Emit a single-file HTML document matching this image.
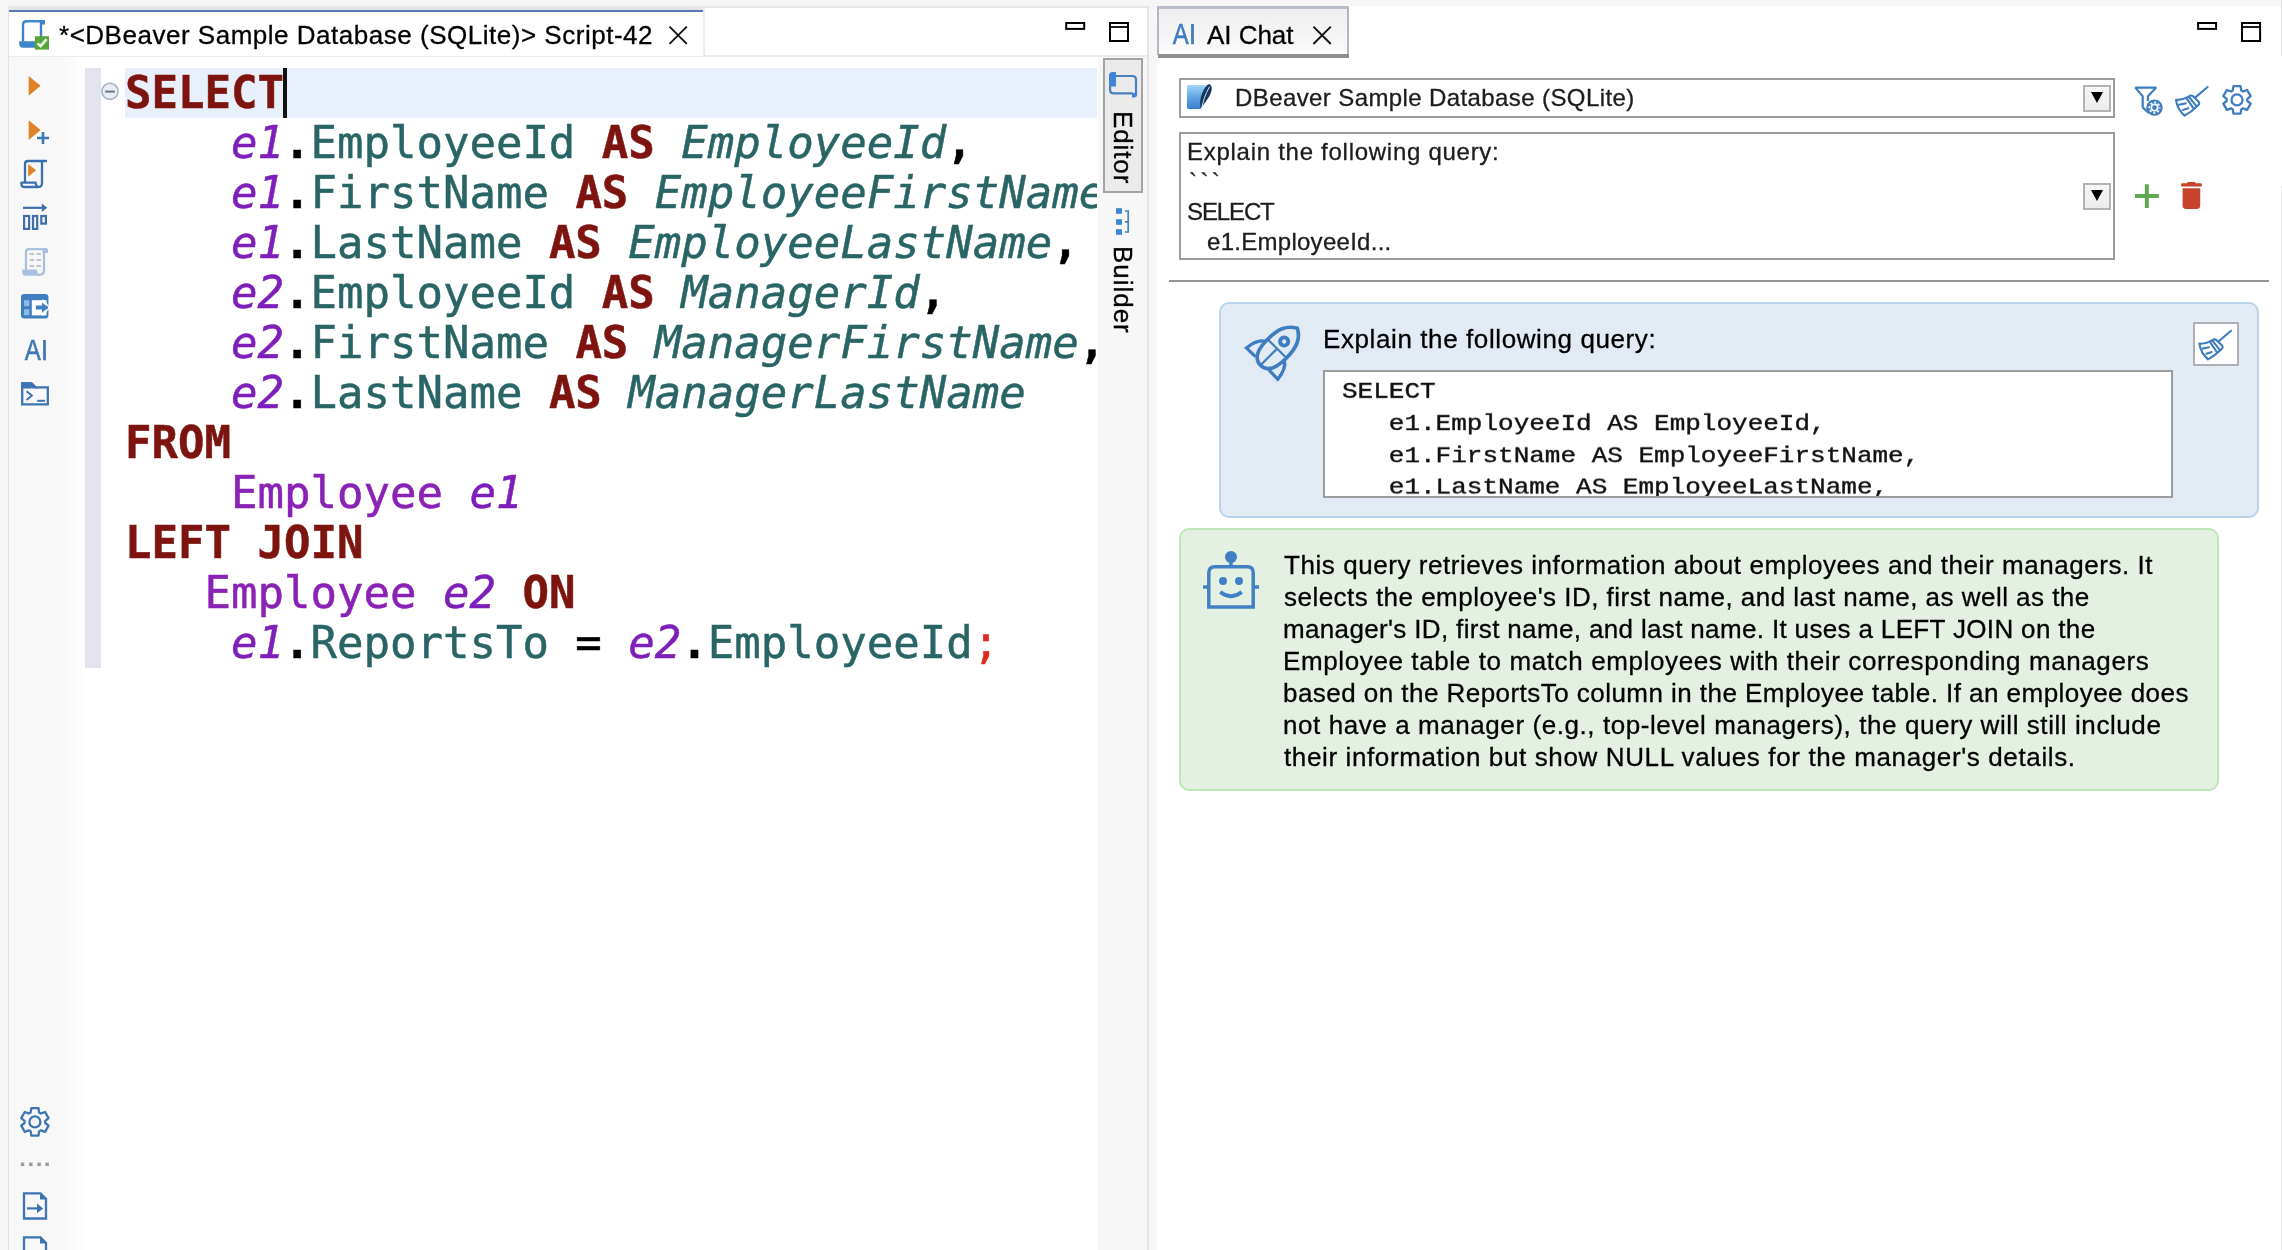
<!DOCTYPE html>
<html lang="en">
<head>
<meta charset="utf-8">
<title>DBeaver - AI Chat</title>
<style>
html,body{margin:0;padding:0;}
body{width:2282px;height:1250px;position:relative;overflow:hidden;background:#f6f6f6;font-family:"Liberation Sans",sans-serif;color:#000;}
.abs{position:absolute;}
.tabtxt,.ui,.chat,#code,#ccode,.vtxt{will-change:transform;}
svg{position:absolute;overflow:visible;}
/* ---------- left pane ---------- */
#lp{left:8px;top:6px;width:1141px;height:1244px;background:#fff;border-left:1px solid #e2e2e2;border-right:2px solid #e4e4e4;border-top:2px solid #e7e7e7;box-sizing:border-box;}
#ltabbar{left:9px;top:8px;width:1138px;height:49px;background:#fff;border-bottom:2px solid #ebebeb;box-sizing:border-box;}
#ltab{left:9px;top:8px;width:696px;height:48px;background:#fff;border-right:2px solid #ebebeb;box-sizing:border-box;}
#ltabtop{left:9px;top:8px;width:694px;height:2px;background:#e3e5e6;}
#ltabline{left:9px;top:10px;width:694px;height:2px;background:#5b79b8;}
.tabtxt{font-size:26px;line-height:30px;white-space:nowrap;-webkit-text-stroke:0.3px #000;}
#toolbar{left:9px;top:57px;width:54px;height:1193px;background:#f8f8f8;}
#tbfade{left:63px;top:57px;width:24px;height:1193px;background:linear-gradient(90deg,#f8f8f8,#ffffff);}
#ruler{left:85px;top:68px;width:16px;height:600px;background:#e3e2ef;}
#curline{left:125px;top:68px;width:972px;height:50px;background:#e8f0fb;}
#caret{left:283px;top:68px;width:4px;height:50px;background:#111;}
#code{left:125px;top:68px;width:972px;height:620px;overflow:hidden;font-family:"DejaVu Sans Mono","Liberation Mono",monospace;font-size:44px;line-height:50px;white-space:pre;color:#000;-webkit-text-stroke:0.5px;}
#code div{height:50px;}
.k{color:#7e1410;font-weight:bold;}
.a{color:#7d1fb8;font-style:italic;}
.c{color:#2a6565;}
.ci{color:#2a6565;font-style:italic;}
.t{color:#8a22b5;}
.r{color:#e0281c;}
#code b{font-weight:bold;color:#000;}
#rstrip{left:1098px;top:57px;width:49px;height:1193px;background:#f7f7f7;}
#edtab{left:1103px;top:58px;width:40px;height:135px;background:#ebebeb;border:2px solid #a4a4a4;box-sizing:border-box;}
.vtxt{font-size:26px;line-height:30px;white-space:nowrap;transform-origin:0 0;transform:rotate(90deg);-webkit-text-stroke:0.3px #000;}
/* ---------- right pane ---------- */
#rp{left:1157px;top:6px;width:1125px;height:1244px;background:#fff;}
#rtab{left:1157px;top:6px;width:191.5px;height:49px;box-sizing:border-box;border:2px solid #b3b6c5;border-top:3.5px solid #b9bccb;border-bottom:none;background:linear-gradient(#eeeef0,#fbfbfb);}
#rtabb{left:1157.5px;top:54.3px;width:191px;height:3.4px;background:#8f8f8f;}
.box{box-sizing:border-box;border:2px solid #9c9c9c;background:#fff;}
.ddbtn{box-sizing:border-box;border:2px solid #b3b3b3;background:linear-gradient(#f6f6f6,#ececec);width:28px;height:27px;}
.ddbtn:after{content:"";position:absolute;left:6px;top:5.6px;border-left:6px solid transparent;border-right:6px solid transparent;border-top:11.4px solid #000;}
.ui{font-size:24px;line-height:30px;white-space:nowrap;color:#1c1c1c;-webkit-text-stroke:0.3px #1c1c1c;}
#sep{left:1169px;top:280px;width:1100px;height:2px;background:#949494;}
#bub1{left:1219px;top:302px;width:1039.5px;height:215.5px;box-sizing:border-box;border:2px solid #b9d3ec;border-radius:10px;background:#e2eaf3;}
#bub2{left:1179px;top:528.4px;width:1039.5px;height:263px;box-sizing:border-box;border:2px solid #bfe6b9;border-radius:10px;background:#e4f0e1;}
.chat{font-size:26px;line-height:32px;white-space:nowrap;color:#000;-webkit-text-stroke:0.3px #000;}
#cbox{left:1323px;top:370px;width:850px;height:128px;overflow:hidden;}
#ccode{left:17px;top:3.5px;font-family:"Liberation Mono",monospace;font-size:26px;line-height:36.78px;white-space:pre;color:#111;-webkit-text-stroke:0.45px #111;transform-origin:0 0;transform:scaleY(0.87);}
#bbtn{left:2193px;top:322px;width:46px;height:44px;box-sizing:border-box;border:2px solid #adb0b5;background:#fff;}
</style>
</head>
<body>
<!-- LEFT PANE -->
<div id="lp" class="abs"></div>
<div id="ltabbar" class="abs"></div>
<div id="ltab" class="abs"></div>
<div id="ltabtop" class="abs"></div>
<div id="ltabline" class="abs"></div>
<div id="t_tab" class="abs tabtxt" style="left:58.60px;top:20px;letter-spacing:0.515px;">*&lt;DBeaver Sample Database (SQLite)&gt; Script-42</div>
<div id="toolbar" class="abs"></div>
<div id="tbfade" class="abs"></div>
<div id="ruler" class="abs"></div>
<div id="curline" class="abs"></div>
<div id="code" class="abs"><div><span class="k">SELECT</span></div><div>    <span class="a">e1</span><b>.</b><span class="c">EmployeeId</span> <span class="k">AS</span> <span class="ci">EmployeeId</span><b>,</b></div><div>    <span class="a">e1</span><b>.</b><span class="c">FirstName</span> <span class="k">AS</span> <span class="ci">EmployeeFirstName</span><b>,</b></div><div>    <span class="a">e1</span><b>.</b><span class="c">LastName</span> <span class="k">AS</span> <span class="ci">EmployeeLastName</span><b>,</b></div><div>    <span class="a">e2</span><b>.</b><span class="c">EmployeeId</span> <span class="k">AS</span> <span class="ci">ManagerId</span><b>,</b></div><div>    <span class="a">e2</span><b>.</b><span class="c">FirstName</span> <span class="k">AS</span> <span class="ci">ManagerFirstName</span><b>,</b></div><div>    <span class="a">e2</span><b>.</b><span class="c">LastName</span> <span class="k">AS</span> <span class="ci">ManagerLastName</span></div><div><span class="k">FROM</span></div><div>    <span class="t">Employee</span> <span class="a">e1</span></div><div><span class="k">LEFT JOIN</span></div><div>   <span class="t">Employee</span> <span class="a">e2</span> <span class="k">ON</span></div><div>    <span class="a">e1</span><b>.</b><span class="c">ReportsTo</span> = <span class="a">e2</span><b>.</b><span class="c">EmployeeId</span><span class="r">;</span></div></div>
<div id="caret" class="abs"></div>
<div id="rstrip" class="abs"></div>
<div id="edtab" class="abs"></div>
<div id="t_ed" class="abs vtxt" style="left:1138px;top:111.00px;letter-spacing:0.880px;">Editor</div>
<div id="t_bu" class="abs vtxt" style="left:1138px;top:246.00px;letter-spacing:0.966px;">Builder</div>
<!--ICL_START--><svg id="icl" style="left:0;top:0" width="1160" height="1250" viewBox="0 0 1160 1250">
<!-- tab icon: script + green check -->
<g fill="none" stroke="#3d84c8" stroke-width="2.4">
<path d="M44.8,21.2 H26.5 Q23,21.2 23,24.7 V41.5"/>
<path d="M41,21.2 V38"/>
</g>
<path d="M40,20 H43.6 Q44.9,20 44.9,21.3 V24.6 H40 Z" fill="#3d84c8"/>
<path d="M19.2,41.3 H36 V47.7 H23 Q19.2,47.7 19.2,44 Z" fill="#3d84c8"/>
<rect x="34.9" y="36.2" width="14.1" height="13.4" fill="#57a53a"/>
<path d="M37.6,43.4 L40.6,46.2 L46.6,39.2" fill="none" stroke="#eef6ea" stroke-width="2.6"/>
<!-- tab close X -->
<path d="M669.5,26.6 L686.8,43.9 M686.8,26.6 L669.5,43.9" stroke="#111" stroke-width="1.9" fill="none"/>
<!-- min / max -->
<rect x="1066.2" y="23" width="18" height="5.9" fill="none" stroke="#000" stroke-width="2"/>
<rect x="1110" y="23" width="18" height="18" fill="none" stroke="#000" stroke-width="2"/>
<path d="M1110,27 H1128" stroke="#000" stroke-width="1.8" fill="none"/>
<!-- 1 play -->
<polygon points="28.7,76 28.7,95.7 40.6,85.8" fill="#e0812b"/>
<!-- 2 play + plus -->
<polygon points="28.7,120.2 28.7,140 40.6,130.1" fill="#e0812b"/>
<path d="M37,138 H49 M43,132 V144" stroke="#3f78b5" stroke-width="2.6" fill="none"/>
<!-- 3 script w/ play -->
<g fill="none" stroke="#3a70b0" stroke-width="2.3" stroke-linejoin="round">
<path d="M47,161 H28 Q25,161 25,164 V182.7"/>
<path d="M42,161.5 V183 Q42,187 38.5,187 H24.5 Q21.4,187 21.4,184 V182.7 H35.6 Q36,187 39,187"/>
</g>
<polygon points="28.1,163.9 28.1,176.7 36.1,170.3" fill="#e0812b"/>
<!-- 4 arrow + bars -->
<g fill="none" stroke="#3d6fa8" stroke-width="2.2">
<path d="M23,207.8 H43"/>
<rect x="24.1" y="216" width="5" height="12.9"/>
<rect x="33" y="216" width="4.2" height="12.9"/>
<rect x="41.3" y="216" width="4.6" height="7.6"/>
</g>
<polygon points="41.8,203.6 47.2,207.8 41.8,212" fill="#3d6fa8"/>
<!-- 5 faded script -->
<g fill="none" stroke="#a9c1df" stroke-width="2.3">
<path d="M44,249.2 H29 Q26,249.2 26,252.2 V270"/>
<path d="M44,249.2 V270 Q44,274.6 40,274.6 H37"/>
</g>
<path d="M42.5,248 H46 Q48,248 48,250 V253 H42.5 Z" fill="#a9c1df"/>
<path d="M22.2,269.5 H37 Q37,274 40,275.7 H26 Q22.2,275.7 22.2,272.5 Z" fill="#a9c1df"/>
<g stroke="#c3c4cf" stroke-width="1.8" fill="none">
<path d="M29.5,254 H34 M36.5,254 H41 M29.5,260 H34 M36.5,260 H41 M29.5,266 H34 M36.5,266 H41"/>
</g>
<!-- 6 table arrow -->
<rect x="21" y="294" width="27.4" height="24.4" rx="3.2" fill="#3f7fc1"/>
<rect x="31.8" y="300.2" width="14.8" height="15.2" fill="#fff"/>
<rect x="24" y="300.2" width="5.3" height="6" fill="#8dbbe4"/>
<rect x="24" y="309.2" width="5.3" height="6" fill="#8dbbe4"/>
<path d="M35.8,305.6 H42 V302.4 L48.4,307.6 L42,312.8 V309.6 H35.8 Z" fill="#3f7fc1"/>
<path d="M42.6,299.6 L49.4,307.6 L42.6,315.6" fill="none" stroke="#fff" stroke-width="1.2"/>
<!-- 7 AI -->
<text transform="translate(24.80,359.90) scale(0.84,1.04)" font-family="Liberation Sans, sans-serif" font-size="28.6" fill="#3f78b5" stroke="#3f78b5" stroke-width="0.55">A</text><text x="40.48" y="359.90" font-family="Liberation Sans, sans-serif" font-size="28.6" fill="#3f78b5" stroke="#3f78b5" stroke-width="0.25">I</text>
<!-- 8 folder terminal -->
<path d="M22.2,404.4 V383.4 H31.5 L35.5,387.4 H47.8 V404.4 Z" fill="none" stroke="#3d74b4" stroke-width="2.3"/>
<path d="M22.2,383.4 H31.5 L35.5,387.4 H22.2 Z" fill="#3d74b4" stroke="#3d74b4" stroke-width="2.3"/>
<path d="M26.6,391.3 L31.8,395.6 L26.6,400" fill="none" stroke="#3d74b4" stroke-width="2"/>
<path d="M37.2,400.8 H45" stroke="#3d74b4" stroke-width="2" fill="none"/>
<!-- gear -->
<g transform="translate(34.9,1121.9)" fill="none" stroke="#3d74b4" stroke-width="2.3" stroke-linejoin="round">
<path d="M4.23,-9.50 L3.56,-13.75 L-3.56,-13.75 L-4.23,-9.50 L-6.11,-8.41 L-10.13,-9.95 L-13.68,-3.79 L-10.34,-1.09 L-10.34,1.09 L-13.68,3.79 L-10.13,9.95 L-6.11,8.41 L-4.23,9.50 L-3.56,13.75 L3.56,13.75 L4.23,9.50 L6.11,8.41 L10.13,9.95 L13.68,3.79 L10.34,1.09 L10.34,-1.09 L13.68,-3.79 L10.13,-9.95 L6.11,-8.41 Z"/>
<circle r="5.5"/>
</g>
<!-- dots -->
<g fill="#9b9b9b">
<rect x="20.8" y="1162.6" width="3.4" height="3.4"/><rect x="29.1" y="1162.6" width="3.4" height="3.4"/><rect x="37.4" y="1162.6" width="3.4" height="3.4"/><rect x="45.4" y="1162.6" width="3.4" height="3.4"/>
</g>
<!-- doc arrow -->
<path d="M24,1193.4 H40.5 L46,1199 V1218.5 H24 Z" fill="none" stroke="#3d74b4" stroke-width="2.3"/>
<path d="M40,1193 L46.5,1199.5 H40 Z" fill="#3d74b4"/>
<path d="M27,1208.4 H38" stroke="#3d74b4" stroke-width="2.2" fill="none"/>
<polygon points="37,1203.6 43.2,1208.4 37,1213.2" fill="#3d74b4"/>
<!-- doc 2 -->
<path d="M24,1252 V1237.4 H40.5 L46,1243 V1252" fill="none" stroke="#3d74b4" stroke-width="2.3"/>
<path d="M40,1237 L46.5,1243.5 H40 Z" fill="#3d74b4"/>
<!-- fold marker -->
<circle cx="110" cy="91.3" r="8.1" fill="#e9eef5" stroke="#a9b4c2" stroke-width="1.6"/>
<path d="M105.2,91.6 H114.8" stroke="#6d7580" stroke-width="2" fill="none"/>
<!-- editor tab icon (rotated script) -->
<g fill="none" stroke="#4a80bb" stroke-width="2.2">
<path d="M1116,76 H1132.5 Q1136,76 1136,79.5 V94"/>
<path d="M1110.1,86 V90 Q1110.1,93.4 1113.5,93.4 H1133"/>
</g>
<path d="M1109,75.5 Q1109,72 1112.5,72 H1116 V86.4 H1109 Z" fill="#3d86d5"/>
<path d="M1132,93 H1137.1 V94.6 Q1137.1,97.6 1134,97.6 H1132 Z" fill="#3d86d5"/>
<!-- builder icon -->
<g fill="#3d86d5">
<rect x="1116" y="208.2" width="6" height="5.6"/><rect x="1116" y="219.2" width="6" height="5.6"/><rect x="1116" y="229.2" width="6" height="5.6"/>
</g>
<path d="M1125,211 H1128.2 V232 H1125 M1125,221.8 H1128.2" fill="none" stroke="#4a80bb" stroke-width="1.7"/>
</svg>
<!--ICL_END-->

<!-- RIGHT PANE -->
<div id="rp" class="abs"></div>
<div id="rtab" class="abs"></div><div id="rtabb" class="abs"></div>
<div id="t_ai" class="abs tabtxt" style="left:1207.20px;top:20px;letter-spacing:-0.033px;">AI Chat</div>

<div class="abs box" style="left:1179px;top:78px;width:936px;height:40px;"></div>
<div id="t_db" class="abs ui" style="left:1235.40px;top:83px;letter-spacing:0.399px;">DBeaver Sample Database (SQLite)</div>
<div class="abs ddbtn" style="left:2083px;top:84.5px;"></div>

<div class="abs box" style="left:1179px;top:132px;width:936px;height:128px;"></div>
<div id="t_u1" class="abs ui" style="left:1186.50px;top:137px;letter-spacing:0.725px;">Explain the following query:</div>
<div id="t_u2" class="abs ui" style="left:1189.00px;top:167px;letter-spacing:3.400px;">```</div>
<div id="t_u3" class="abs ui" style="left:1187.20px;top:197px;letter-spacing:-1.120px;">SELECT</div>
<div id="t_u4" class="abs ui" style="left:1207.00px;top:227px;letter-spacing:0.279px;">e1.EmployeeId...</div>
<div class="abs ddbtn" style="left:2083px;top:182.5px;"></div>

<div id="sep" class="abs"></div>

<div id="bub1" class="abs"></div>
<div id="t_c0" class="abs chat" style="left:1322.50px;top:323px;letter-spacing:0.598px;">Explain the following query:</div>
<div id="cbox" class="abs box"><div id="ccode" class="abs">SELECT
   e1.EmployeeId AS EmployeeId,
   e1.FirstName AS EmployeeFirstName,
   e1.LastName AS EmployeeLastName,
   e2.EmployeeId AS ManagerId,</div></div>
<div id="bbtn" class="abs"></div>

<div id="bub2" class="abs"></div>
<div id="t_l1" class="abs chat" style="left:1284.00px;top:549px;letter-spacing:0.558px;">This query retrieves information about employees and their managers. It</div>
<div id="t_l2" class="abs chat" style="left:1284.40px;top:581px;letter-spacing:0.470px;">selects the employee's ID, first name, and last name, as well as the</div>
<div id="t_l3" class="abs chat" style="left:1283.40px;top:613px;letter-spacing:0.348px;">manager's ID, first name, and last name. It uses a LEFT JOIN on the</div>
<div id="t_l4" class="abs chat" style="left:1282.60px;top:645px;letter-spacing:0.615px;">Employee table to match employees with their corresponding managers</div>
<div id="t_l5" class="abs chat" style="left:1283.40px;top:677px;letter-spacing:0.457px;">based on the ReportsTo column in the Employee table. If an employee does</div>
<div id="t_l6" class="abs chat" style="left:1283.40px;top:709px;letter-spacing:0.575px;">not have a manager (e.g., top-level managers), the query will still include</div>
<div id="t_l7" class="abs chat" style="left:1284.40px;top:741px;letter-spacing:0.623px;">their information but show NULL values for the manager's details.</div>
<div class="abs" style="left:2281px;top:0;width:1px;height:56px;background:#dedede;"></div><div class="abs" style="left:2281px;top:186px;width:1px;height:1064px;background:#e8e8e8;"></div>
<!--ICR_START--><svg id="icr" style="left:1150px;top:0" width="1132" height="1250" viewBox="1150 0 1132 1250">
<!-- AI tab icon -->
<text transform="translate(1172.80,43.80) scale(0.84,1.04)" font-family="Liberation Sans, sans-serif" font-size="28.6" fill="#3f7cc0" stroke="#3f7cc0" stroke-width="0.55">A</text><text x="1188.48" y="43.80" font-family="Liberation Sans, sans-serif" font-size="28.6" fill="#3f7cc0" stroke="#3f7cc0" stroke-width="0.25">I</text>
<!-- tab close -->
<path d="M1313.4,26.6 L1330.8,44 M1330.8,26.6 L1313.4,44" stroke="#111" stroke-width="1.9" fill="none"/>
<!-- min / max -->
<rect x="2198.1" y="23" width="18" height="5.9" fill="none" stroke="#000" stroke-width="2"/>
<rect x="2242" y="23" width="18.1" height="18" fill="none" stroke="#000" stroke-width="2"/>
<path d="M2242,27 H2260" stroke="#000" stroke-width="1.8" fill="none"/>
<!-- sqlite -->
<defs><linearGradient id="sq" x1="0" y1="0" x2="0" y2="1"><stop offset="0" stop-color="#a3d6f6"/><stop offset="0.5" stop-color="#62a4e2"/><stop offset="1" stop-color="#3a7ed0"/></linearGradient></defs>
<path d="M1188.4,85 H1206 L1200.6,109 H1188.6 Q1187,109 1187,107.4 V86.4 Q1187,85 1188.4,85 Z" fill="url(#sq)"/>
<path d="M1209.4,83.9 C1206,84.5 1202,91 1200.3,100 C1199.8,104 1200.2,107 1200.6,108.5 C1203,105 1207,100.5 1209.5,96 C1212,91 1213,86 1209.4,83.9 Z" fill="#14395c"/>
<path d="M1209.6,86.6 Q1203,98 1201.2,111.6" fill="none" stroke="#cfe2f2" stroke-width="1"/>
<!-- filter+gear -->
<g fill="none" stroke="#3e7cbf" stroke-width="2.2" stroke-linejoin="miter" stroke-miterlimit="1.5">
<path d="M2142.7,107.4 V96.3 L2135.4,87.6 H2156.2 L2147.9,96.3 V101"/>
<path d="M2142.7,107.4 L2148.8,113"/>
</g>
<circle cx="2154.5" cy="107.6" r="8.2" fill="#3e7cbf"/>
<circle cx="2154.5" cy="107.6" r="4.1" fill="#f4f8fc"/>
<circle cx="2154.5" cy="107.6" r="5.2" fill="none" stroke="#f4f8fc" stroke-width="1.7" stroke-dasharray="2.2 1.884" stroke-dashoffset="1.1"/>
<circle cx="2154.5" cy="107.6" r="2.3" fill="#3e7cbf"/>
<!-- broom -->
<g transform="translate(2175.2,86.4)" fill="none" stroke="#3e7cbf" stroke-width="2.1" stroke-linejoin="round" stroke-linecap="round">
<path d="M32.4,0.6 L20.2,11"/>
<path d="M13,10.5 Q15.3,8.2 17.8,9.8 L23.4,15.4 Q25,17.2 22.8,19 Q16,25.6 9.4,29.2 Q2,22.5 0.8,13.4 Q7,14 13,10.5 Z"/>
<path d="M14.2,11 L21,19.4 M11.8,12.4 L18.2,21.8"/>
<path d="M3.8,18.4 L10.4,17 M7.7,23.5 L13,21.8"/>
</g>
<!-- gear -->
<g transform="translate(2237,99.9)" fill="none" stroke="#3e7cbf" stroke-width="2.3" stroke-linejoin="round"><path d="M4.23,-9.50 L3.56,-13.75 L-3.56,-13.75 L-4.23,-9.50 L-6.11,-8.41 L-10.13,-9.95 L-13.68,-3.79 L-10.34,-1.09 L-10.34,1.09 L-13.68,3.79 L-10.13,9.95 L-6.11,8.41 L-4.23,9.50 L-3.56,13.75 L3.56,13.75 L4.23,9.50 L6.11,8.41 L10.13,9.95 L13.68,3.79 L10.34,1.09 L10.34,-1.09 L13.68,-3.79 L10.13,-9.95 L6.11,-8.41 Z"/><circle r="5.5"/></g>
<!-- plus -->
<path d="M2135,196 H2158.9 M2146.9,184.2 V208" stroke="#5dab4e" stroke-width="3.9" fill="none"/>
<!-- trash -->
<path d="M2182.6,188.3 H2200.2 V205.6 Q2200.2,209 2196.8,209 H2186 Q2182.6,209 2182.6,205.6 Z" fill="#c8432b"/>
<path d="M2181.1,186.6 V184.2 Q2181.1,183.2 2182.2,183.2 H2186.8 Q2187.4,182 2188.6,182 H2194.2 Q2195.4,182 2196,183.2 H2200.6 Q2201.8,183.2 2201.8,184.2 V186.6 Z" fill="#c8432b"/>
<!-- rocket -->
<g transform="translate(1278.7,347) rotate(-45)" fill="none" stroke="#3f7dc1" stroke-linejoin="round">
<path d="M26.4,0 C21,10 12,13.3 -3,13.3 C-17,13.3 -25.8,9 -25.8,0 C-25.8,-9 -17,-13.3 -3,-13.3 C12,-13.3 21,-10 26.4,0 Z" stroke-width="3.7" stroke-linejoin="miter"/>
<path d="M-2.3,-13 V13" stroke-width="2.2"/>
<path d="M-2.3,0 H-25.8" stroke-width="2.2"/>
<circle cx="7.7" cy="0" r="4.1" stroke-width="3.9"/>
<path d="M-5.5,13.4 C-8,18 -13,21 -23.5,22.2 L-23.2,9.6" stroke-width="3.3" stroke-linejoin="miter" stroke-miterlimit="3"/>
<path d="M-5.5,-13.4 C-8,-18 -13,-21 -23.5,-22.2 L-23.2,-9.6" stroke-width="3.3" stroke-linejoin="miter" stroke-miterlimit="3"/>
</g>
<!-- bbtn broom -->
<g transform="translate(2198.6,330.2)" fill="none" stroke="#3e7cbf" stroke-width="2.1" stroke-linejoin="round" stroke-linecap="round">
<path d="M32.4,0.6 L20.2,11"/>
<path d="M13,10.5 Q15.3,8.2 17.8,9.8 L23.4,15.4 Q25,17.2 22.8,19 Q16,25.6 9.4,29.2 Q2,22.5 0.8,13.4 Q7,14 13,10.5 Z"/>
<path d="M14.2,11 L21,19.4 M11.8,12.4 L18.2,21.8"/>
<path d="M3.8,18.4 L10.4,17 M7.7,23.5 L13,21.8"/>
</g>
<!-- robot -->
<g fill="none" stroke="#4080c4" stroke-width="3.5">
<path d="M1208.8,607 V572.8 Q1208.8,566.8 1214.8,566.8 H1247.2 Q1253.2,566.8 1253.2,572.8 V607 Z"/>
<path d="M1231,561 V566.8 M1203.1,586.9 H1208 M1254,586.9 H1259.1"/>
<path d="M1220.2,592 Q1231,600.4 1241.8,592" stroke-width="3.8"/>
</g>
<g fill="#4080c4"><circle cx="1231" cy="557" r="6"/><circle cx="1223" cy="581" r="4"/><circle cx="1239" cy="581" r="4"/></g>
</svg><!--ICR_END-->
</body>
</html>
